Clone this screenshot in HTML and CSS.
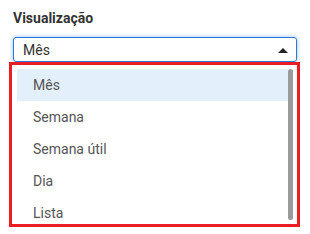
FILE: index.html
```html
<!DOCTYPE html>
<html lang="pt">
<head>
    <meta charset="UTF-8">
    <meta name="viewport" content="width=device-width, initial-scale=1.0">
    <title>Visualização</title>
    <link rel="stylesheet" href="styles.css">
</head>
<body>

    <div class="field">
        <label class="field-label">Visualização</label>

        <div class="select">
            <span class="select-value">Mês</span>
            <span class="caret"></span>
        </div>

        <div class="menu">
            <ul class="options">
                <li class="active">Mês</li>
                <li>Semana</li>
                <li>Semana útil</li>
                <li>Dia</li>
                <li>Lista</li>
            </ul>
            <div class="scrollbar"></div>
        </div>
    </div>

</body>
</html>
```

FILE: styles.css
```css
body {
    margin: 0;
    background: #fff;
    font-family: Roboto, "Liberation Sans", Arial, sans-serif;
}

.field {
    width: 310px;
    height: 234px;
    padding-top: 10px;
    box-sizing: border-box;
}

.field-label {
    display: block;
    margin: 0 13px 11px;
    font-size: 14px;
    font-weight: bold;
    color: #333;
    line-height: 16px;
}

.select {
    display: flex;
    align-items: center;
    justify-content: space-between;
    height: 25px;
    margin: 0 13px;
    padding: 0 8px 0 9px;
    border: 1px solid #2b7bd6;
    border-radius: 3px;
    box-shadow: 0 0 4px rgba(43, 123, 214, 0.5);
    box-sizing: border-box;
    font-size: 14px;
    color: #333;
}

.caret {
    width: 0;
    height: 0;
    border-left: 5px solid transparent;
    border-right: 5px solid transparent;
    border-bottom: 5px solid #222;
    margin-top: 2px;
}

.menu {
    position: relative;
    display: flex;
    height: 165px;
    margin: 0 10px 0 9px;
    padding: 4px 4px 4px 5px;
    border: 3px solid #ec1c24;
    background: #fff;
    box-sizing: border-box;
}

.options {
    flex: 1;
    margin: 0;
    padding: 0;
    list-style: none;
    overflow: hidden;
}

.options li {
    height: 32px;
    line-height: 32px;
    padding-left: 16px;
    font-size: 14px;
    color: #555;
}

.options li.active {
    background: #e3effa;
}

.scrollbar {
    width: 5px;
    border-radius: 3px;
    background: #9a9a9a;
}
```
